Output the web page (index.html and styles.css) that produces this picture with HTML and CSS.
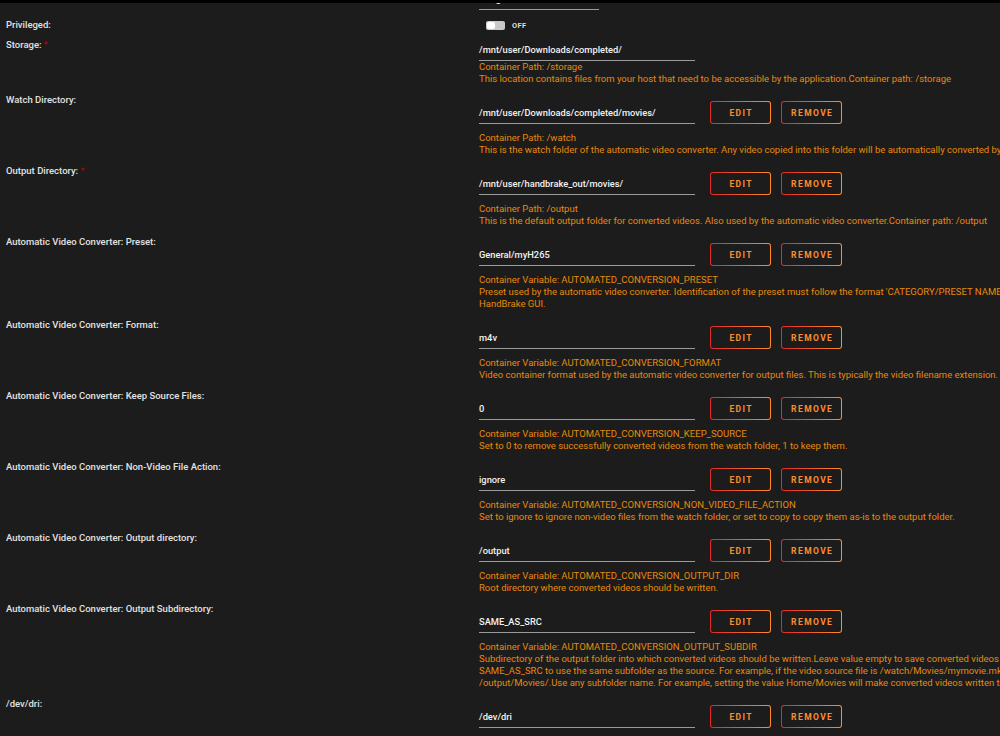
FILE: index.html
```html
<!DOCTYPE html>
<html lang="en">
<head>
  <meta charset="UTF-8" />
  <meta name="viewport" content="width=device-width,initial-scale=1" />
  <title>Update Container – HandBrake</title>
  <link rel="stylesheet" href="styles.css">
</head>
<body>

  <div class="topbar"></div>

  <main class="form">

    <div class="item">
      <div class="label">Network Type:</div>
      <div class="field">
        <div class="row"><div class="input short">Bridge</div></div>
      </div>
    </div>

    <div class="item switch">
      <div class="label">Privileged:</div>
      <div class="field">
        <div class="toggle"><span class="track"><span class="knob"></span></span><span class="state">OFF</span></div>
      </div>
    </div>

    <div class="item">
      <div class="label">Storage: <span class="req">*</span></div>
      <div class="field">
        <div class="row"><div class="input">/mnt/user/Downloads/completed/</div></div>
        <p class="help">Container Path: /storage</p>
        <p class="help">This location contains files from your host that need to be accessible by the application.Container path: /storage</p>
      </div>
    </div>

    <div class="item">
      <div class="label">Watch Directory:</div>
      <div class="field">
        <div class="row">
          <div class="input">/mnt/user/Downloads/completed/movies/</div>
          <button class="btn">EDIT</button><button class="btn">REMOVE</button>
        </div>
        <p class="help">Container Path: /watch</p>
        <p class="help">This is the watch folder of the automatic video converter. Any video copied into this folder will be automatically converted by HandBrake.Container path: /watch</p>
      </div>
    </div>

    <div class="item">
      <div class="label">Output Directory: <span class="req">*</span></div>
      <div class="field">
        <div class="row">
          <div class="input">/mnt/user/handbrake_out/movies/</div>
          <button class="btn">EDIT</button><button class="btn">REMOVE</button>
        </div>
        <p class="help">Container Path: /output</p>
        <p class="help">This is the default output folder for converted videos. Also used by the automatic video converter.Container path: /output</p>
      </div>
    </div>

    <div class="item">
      <div class="label">Automatic Video Converter: Preset:</div>
      <div class="field">
        <div class="row">
          <div class="input">General/myH265</div>
          <button class="btn">EDIT</button><button class="btn">REMOVE</button>
        </div>
        <p class="help">Container Variable: AUTOMATED_CONVERSION_PRESET</p>
        <p class="help">Preset used by the automatic video converter. Identification of the preset must follow the format 'CATEGORY/PRESET NAME'. See the list of available presets in the</p>
        <p class="help">HandBrake GUI.</p>
      </div>
    </div>

    <div class="item">
      <div class="label">Automatic Video Converter: Format:</div>
      <div class="field">
        <div class="row">
          <div class="input">m4v</div>
          <button class="btn">EDIT</button><button class="btn">REMOVE</button>
        </div>
        <p class="help">Container Variable: AUTOMATED_CONVERSION_FORMAT</p>
        <p class="help">Video container format used by the automatic video converter for output files. This is typically the video filename extension. Possible values are mp4 and mkv.</p>
      </div>
    </div>

    <div class="item">
      <div class="label">Automatic Video Converter: Keep Source Files:</div>
      <div class="field">
        <div class="row">
          <div class="input">0</div>
          <button class="btn">EDIT</button><button class="btn">REMOVE</button>
        </div>
        <p class="help">Container Variable: AUTOMATED_CONVERSION_KEEP_SOURCE</p>
        <p class="help">Set to 0 to remove successfully converted videos from the watch folder, 1 to keep them.</p>
      </div>
    </div>

    <div class="item">
      <div class="label">Automatic Video Converter: Non-Video File Action:</div>
      <div class="field">
        <div class="row">
          <div class="input">ignore</div>
          <button class="btn">EDIT</button><button class="btn">REMOVE</button>
        </div>
        <p class="help">Container Variable: AUTOMATED_CONVERSION_NON_VIDEO_FILE_ACTION</p>
        <p class="help">Set to ignore to ignore non-video files from the watch folder, or set to copy to copy them as-is to the output folder.</p>
      </div>
    </div>

    <div class="item">
      <div class="label">Automatic Video Converter: Output directory:</div>
      <div class="field">
        <div class="row">
          <div class="input">/output</div>
          <button class="btn">EDIT</button><button class="btn">REMOVE</button>
        </div>
        <p class="help">Container Variable: AUTOMATED_CONVERSION_OUTPUT_DIR</p>
        <p class="help">Root directory where converted videos should be written.</p>
      </div>
    </div>

    <div class="item">
      <div class="label">Automatic Video Converter: Output Subdirectory:</div>
      <div class="field">
        <div class="row">
          <div class="input">SAME_AS_SRC</div>
          <button class="btn">EDIT</button><button class="btn">REMOVE</button>
        </div>
        <p class="help">Container Variable: AUTOMATED_CONVERSION_OUTPUT_SUBDIR</p>
        <p class="help">Subdirectory of the output folder into which converted videos should be written.Leave value empty to save converted videos in the root of the output folder. Use</p>
        <p class="help">SAME_AS_SRC to use the same subfolder as the source. For example, if the video source file is /watch/Movies/mymovie.mkv, the converted file will be written to</p>
        <p class="help">/output/Movies/.Use any subfolder name. For example, setting the value Home/Movies will make converted videos written to /output/Home/Movies/.</p>
      </div>
    </div>

    <div class="item">
      <div class="label">/dev/dri:</div>
      <div class="field">
        <div class="row">
          <div class="input">/dev/dri</div>
          <button class="btn">EDIT</button><button class="btn">REMOVE</button>
        </div>
        <p class="help">Container Device: /dev/dri</p>
      </div>
    </div>

  </main>

</body>
</html>
```
FILE: styles.css
```css
:root {
  --bg:     #1c1c1c;
  --text:   #f2f2f2;
  --help:   #e68a0c;
  --orange: #ff8c2f;
  --red:    #e22828;
  --line:   #9a9a9a;
}
* { box-sizing: border-box; margin:0; padding:0; }
html, body { overflow:hidden; }
body {
  font-family: Roboto, 'Liberation Sans', sans-serif;
  background: var(--bg);
  color: var(--text);
  width:1000px; height:736px;
}

.topbar {
  position:fixed; top:0; left:0; right:0;
  height:3px; background:#000; z-index:2;
}

.form { margin-top:-13px; }

.item { display:flex; margin-bottom:8px; }
.item.switch { margin-bottom:6px; }
.label {
  flex:0 0 479px; padding-left:6px;
  font-size:9.5px; font-weight:500; line-height:14px;
  color: #e2e2e2;
}
.req { color:#a30d0d; font-weight:400; }

.field { flex:1; white-space:nowrap; }
.row { display:flex; align-items:center; }
.input {
  width:216px; height:21px; margin-top:2px;
  border-bottom:1px solid var(--line);
  font-size:9.3px; font-weight:500; line-height:20px; color: var(--text);
}
.input.short { width:120px; }

.btn {
  width:61px; height:23px; margin:8px 0 8px 10px;
  border:1.5px solid transparent; border-radius:3px;
  background:
    linear-gradient(var(--bg), var(--bg)) padding-box,
    linear-gradient(90deg, var(--red), var(--orange)) border-box;
  color: var(--orange);
  font-family: Roboto, sans-serif;
  font-size:8.5px; font-weight:700; letter-spacing:1.4px;
  padding-left:1.4px; cursor:pointer;
}
.input + .btn { margin-left:15px; }

.help {
  font-size:9.5px; line-height:12px; color: var(--help);
}

/* Privileged switch */
.toggle {
  display:flex; align-items:center; gap:7px;
  height:14px; padding-left:7px;
}
.track {
  display:flex; width:19px; height:9px;
  background:#c9c9c9; border-radius:2px; padding:1px;
}
.knob { width:8px; height:7px; background:#fff; border-radius:2px; }
.state { font-size:7.5px; font-weight:700; color:#dcdcdc; letter-spacing:.3px; }
```
